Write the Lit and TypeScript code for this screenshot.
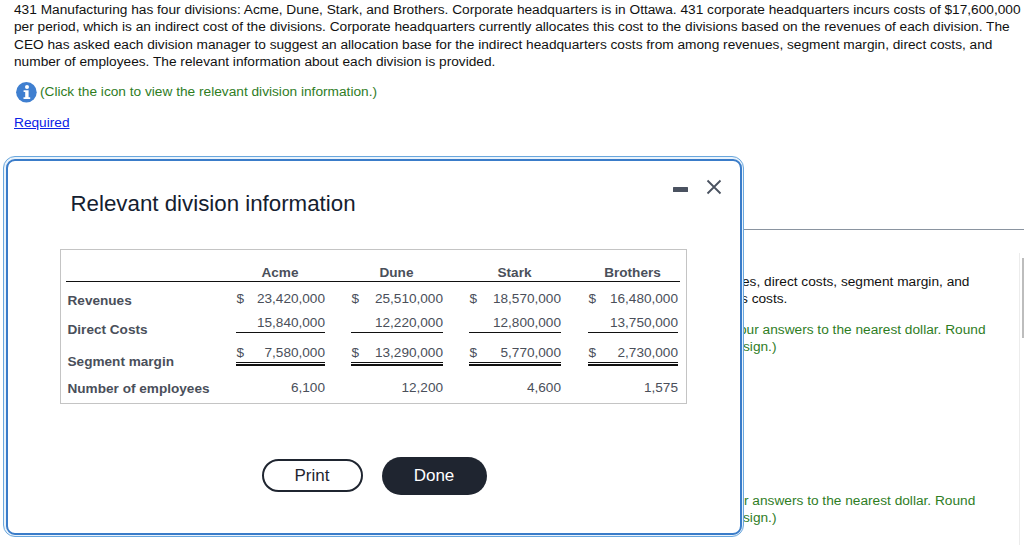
import { LitElement, html, css } from "lit";
import { customElement } from "lit/decorators.js";

const rows = [
  { label: "Revenues", cls: "r1", dollar: true, line: "", values: ["23,420,000", "25,510,000", "18,570,000", "16,480,000"] },
  { label: "Direct Costs", cls: "r2", dollar: false, line: "single", values: ["15,840,000", "12,220,000", "12,800,000", "13,750,000"] },
  { label: "Segment margin", cls: "r3", dollar: true, line: "double", values: ["7,580,000", "13,290,000", "5,770,000", "2,730,000"] },
  { label: "Number of employees", cls: "r4", dollar: false, line: "", values: ["6,100", "12,200", "4,600", "1,575"] },
];

@customElement("app-root")
export class AppRoot extends LitElement {
  static styles = css`
    :host { display: block; width: 1024px; height: 545px; overflow: hidden; position: relative; background: #fff; font-family: "Liberation Sans", Arial, sans-serif; color: #111; }
    .page { display: flex; flex-direction: column; height: 545px; }
    .intro { margin: 0; padding: 1px 0 0 14px; font-size: 13.7px; line-height: 17.3px; width: 1010px; white-space: nowrap; }
    .hint { display: flex; align-items: center; gap: 2px; padding: 10px 0 0 14px; color: #2f7d1f; font-size: 13.7px; line-height: 22px; }
    .hint svg { display: block; }
    .req { padding: 10px 0 0 14px; font-size: 13.7px; line-height: 17px; color: #0b22e6; text-decoration: underline; }
    .rule { margin: 98px 0 0 740px; height: 1px; background: #8a94a0; flex: none; }
    .lower { flex: 1; display: flex; }
    .answers { flex: 1; font-size: 13.7px; line-height: 17px; white-space: nowrap; padding-top: 43px; }
    .answers .green { color: #2f7d1f; }
    .l1 { padding-left: 742px; }
    .l2 { padding-left: 741px; }
    .l3 { padding-left: 739px; margin-top: 14px; }
    .l4 { padding-left: 743px; }
    .l5 { padding-left: 744px; margin-top: 137px; }
    .track { flex: none; width: 4px; margin-top: 23px; border-left: 1px solid #ececec; background: #fff; display: flex; justify-content: flex-end; align-items: flex-start; }
    .thumb { width: 2px; height: 80px; margin-top: 5px; background: #bdbdbd; }

    .dialog { position: absolute; left: 3px; top: 156px; width: 741px; height: 381px; box-sizing: border-box; border: 1.5px solid #6aa7dd; border-radius: 12px; padding: 1.5px; background: #eaf3fb; }
    .inner { box-sizing: border-box; height: 100%; border: 2px solid #3a7cc9; border-radius: 9px; background: #fff; display: flex; flex-direction: column; position: relative; }
    .title { margin: 0; padding: 28px 0 0 63px; font-size: 22.3px; font-weight: 400; line-height: 30px; color: #14202f; }
    .tools { position: absolute; right: 18px; top: 18px; display: flex; align-items: flex-start; gap: 18px; }
    .tools svg { display: block; }
    .minus { margin-top: 8px; }

    .tablebox { margin: 30px 0 0 52px; width: 627px; height: 155px; box-sizing: border-box; border: 1px solid #c4c4c4; padding: 0 0 0 5px; font-size: 13.6px; color: #4a4f5a; display: grid; grid-template-columns: 170px 89px 26px 92px 26px 92px 27px 90px; grid-template-rows: 32px 27px 24px 34px 1fr; }
    .head { font-weight: 700; text-align: center; padding-top: 15px; line-height: 16px; border-bottom: 1px solid #111; white-space: nowrap; }
    .head.last { margin-right: -2px; padding-right: 2px; }
    .headrule { border-bottom: 1px solid #111; }
    .label { font-weight: 700; white-space: nowrap; line-height: 16px; padding-left: 2px; }
    .val { display: flex; justify-content: space-between; line-height: 16px; padding: 0 0 0 1px; box-sizing: border-box; }
    .val span:last-child { margin-right: -0.5px; }
    .label.r1 { padding-top: 11px; }
    .val.r1 { padding-top: 9px; }
    .label.r2 { padding-top: 13px; }
    .val.r2 { padding-top: 6px; }
    .label.r3 { padding-top: 21px; }
    .val.r3 { padding-top: 12px; margin-bottom: 1px; }
    .label.r4 { padding-top: 14px; }
    .val.r4 { padding-top: 13px; }
    .single { border-bottom: 1px solid #111; }
    .double { border-bottom: 2px solid #111; background: linear-gradient(#111, #111) 0 calc(100% - 1px) / 100% 1px no-repeat; }

    .actions { display: flex; align-items: center; gap: 19px; margin: 53px 0 0 254px; }
    button { font: inherit; font-size: 17px; border-radius: 20px; box-sizing: border-box; padding: 0; }
    .print { width: 101px; height: 33px; background: #fff; border: 2px solid #1f2530; color: #1f2530; }
    .done { width: 105px; height: 38px; background: #1f2530; border: 0; color: #fff; }
  `;

  render() {
    const heads = ["Acme", "Dune", "Stark", "Brothers"];
    return html`
      <div class="page">
        <p class="intro">431 Manufacturing has four divisions: Acme, Dune, Stark, and Brothers. Corporate headquarters is in Ottawa. 431 corporate headquarters incurs costs of $17,600,000<br>per period, which is an indirect cost of the divisions. Corporate headquarters currently allocates this cost to the divisions based on the revenues of each division. The<br>CEO has asked each division manager to suggest an allocation base for the indirect headquarters costs from among revenues, segment margin, direct costs, and<br>number of employees. The relevant information about each division is provided.</p>
        <div class="hint">
          <svg width="24" height="24" viewBox="0 0 24 24"><circle cx="12.4" cy="12.2" r="10.3" fill="#3f7fd0"/><circle cx="13" cy="7" r="2" fill="#fff"/><path d="M9.6 10.2h5v7h1.6v1.9H9.5v-1.9h1.7v-5.1H9.6z" fill="#fff"/></svg>
          <span>(Click the icon to view the relevant division information.)</span>
        </div>
        <div class="req">Required</div>
        <div class="rule"></div>
        <div class="lower">
          <div class="answers">
            <div class="l1">es, direct costs, segment margin, and</div>
            <div class="l2">s costs.</div>
            <div class="green l3">our answers to the nearest dollar. Round</div>
            <div class="green l4">sign.)</div>
            <div class="green l5">r answers to the nearest dollar. Round</div>
            <div class="green l4">sign.)</div>
          </div>
          <div class="track"><div class="thumb"></div></div>
        </div>
      </div>
      <div class="dialog">
        <div class="inner">
          <h2 class="title">Relevant division information</h2>
          <div class="tools">
            <svg class="minus" width="15" height="5" viewBox="0 0 15 5"><rect width="15" height="5" rx="0.5" fill="#4a5260"/></svg>
            <svg width="16" height="16" viewBox="0 0 16 16"><path d="M1.5 1.5l13 13M14.5 1.5l-13 13" stroke="#4a5260" stroke-width="1.8" fill="none"/></svg>
          </div>
          <div class="tablebox">
            <div class="headrule"></div>
            ${heads.map((h, i) => html`${i ? html`<div class="headrule"></div>` : ""}<div class="head ${i === 3 ? "last" : ""}">${h}</div>`)}
            ${rows.map((r) => html`
              <div class="label ${r.cls}">${r.label}</div>
              ${r.values.map((v, i) => html`${i ? html`<div></div>` : ""}<div class="val ${r.cls} ${r.line}"><span>${r.dollar ? "$" : ""}</span><span>${v}</span></div>`)}
            `)}
          </div>
          <div class="actions">
            <button class="print">Print</button>
            <button class="done">Done</button>
          </div>
        </div>
      </div>
    `;
  }
}
